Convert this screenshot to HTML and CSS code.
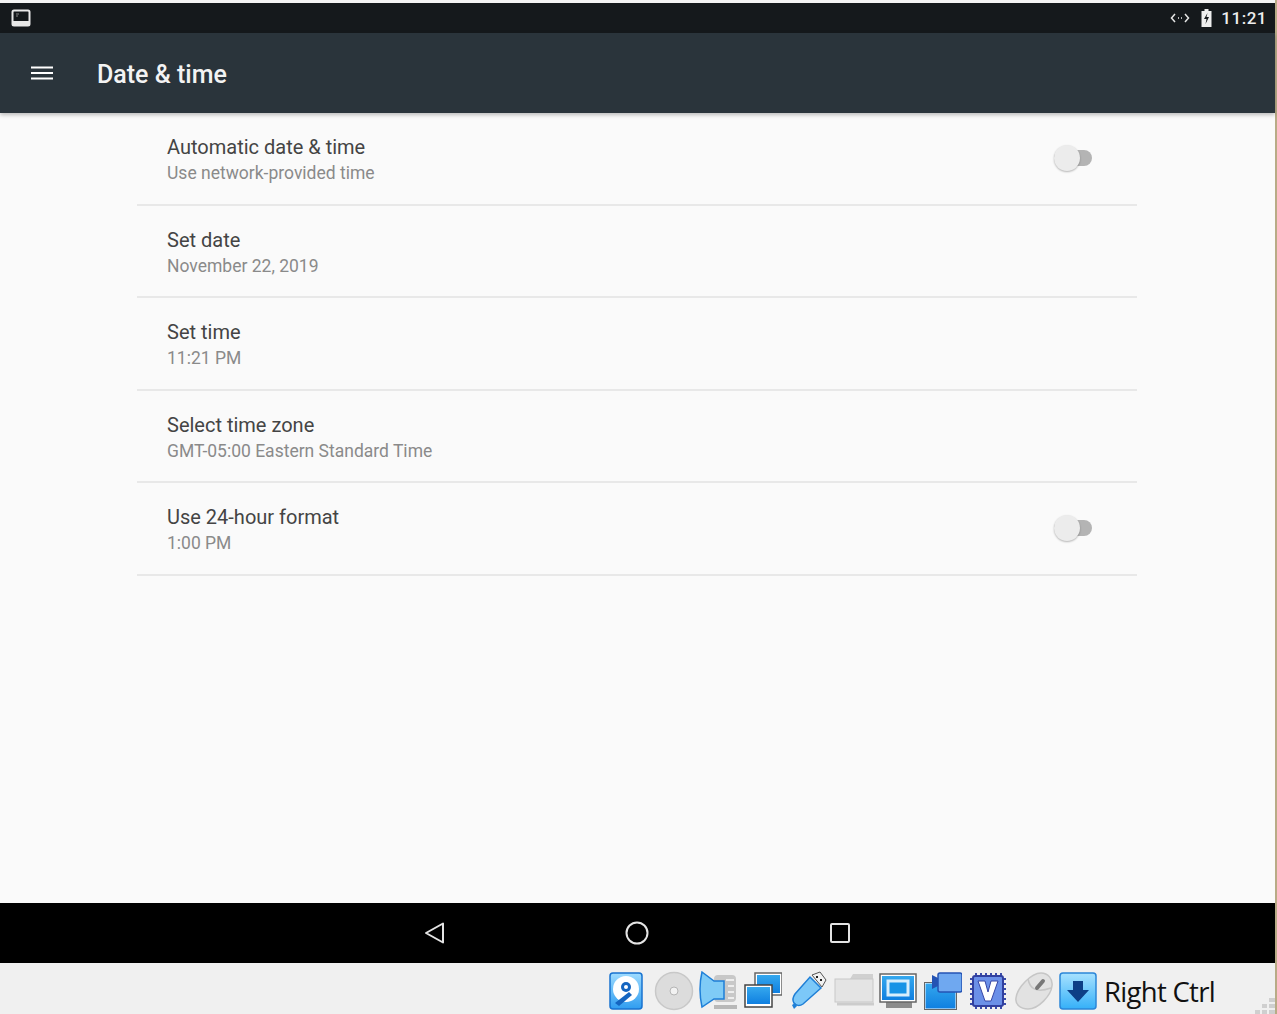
FILE: index.html
```html
<!DOCTYPE html>
<html lang="en">
<head>
<meta charset="utf-8">
<title>Date &amp; time</title>
<link rel="stylesheet" href="styles.css">
</head>
<body>
<div class="screen">
  <div class="statusbar">
    <svg class="vm-icon" width="20" height="18" viewBox="0 0 20 18"><rect x="1.500" y="1.500" width="17" height="15" rx="1.500" fill="#15191c" stroke="#e8e8e8" stroke-width="2"/><rect x="2" y="12" width="16" height="4" fill="#e8e8e8"/><path d="M5 5h3M5 7h2" stroke="#888" stroke-width="1"/></svg>
    <div class="status-right">
      <svg width="20" height="12" viewBox="0 0 20 12" fill="none" stroke="#e6e6e6" stroke-width="1.500"><path d="M5 2 1.500 6 5 10M15 2l3.500 4L15 10"/><path d="M8 6h1M11 6h1"/></svg>
      <svg class="battery" width="13" height="18" viewBox="0 0 12 18"><path d="M4 0h4v2h3v16H1V2h3z" fill="#eee"/><path d="M7 4 3.500 10H6l-1 5 3.500-7H6z" fill="#15191c"/></svg>
      <span class="clock">11:21</span>
    </div>
  </div>
  <header class="toolbar">
    <svg class="menu" width="24" height="16" viewBox="0 0 24 16"><path d="M1 2.500h22M1 8h22M1 13.500h22" stroke="#fff" stroke-width="2"/></svg>
    <h1 class="title">Date &amp; time</h1>
  </header>
  <main class="content">
    <div class="list">
      <div class="row"><div><div class="row-title">Automatic date &amp; time</div><div class="row-sub">Use network-provided time</div></div><div class="switch"><i class="thumb"></i></div></div>
      <div class="row"><div><div class="row-title">Set date</div><div class="row-sub">November 22, 2019</div></div></div>
      <div class="row"><div><div class="row-title">Set time</div><div class="row-sub">11:21 PM</div></div></div>
      <div class="row"><div><div class="row-title">Select time zone</div><div class="row-sub">GMT-05:00 Eastern Standard Time</div></div></div>
      <div class="row"><div><div class="row-title">Use 24-hour format</div><div class="row-sub">1:00 PM</div></div><div class="switch"><i class="thumb"></i></div></div>
    </div>
  </main>
  <nav class="navbar">
    <svg width="24" height="26" viewBox="0 0 24 26" fill="none" stroke="#e4e4e4" stroke-width="2" stroke-linejoin="round"><path d="M20 3.500v19L3 13z"/></svg>
    <svg width="24" height="24" viewBox="0 0 24 24" fill="none" stroke="#e4e4e4" stroke-width="2"><circle cx="12" cy="12" r="10.500"/></svg>
    <svg class="nav-square" width="22" height="22" viewBox="0 0 22 22" fill="none" stroke="#e4e4e4" stroke-width="2" stroke-linejoin="round"><rect x="2" y="2" width="18" height="18" rx="1"/></svg>
  </nav>
  <footer class="vbox">
    <div class="tray">
      <svg class="ic" width="34" height="38" viewBox="0 0 34 38"><defs><linearGradient id="b" x1="0" y1="0" x2="0" y2="1"><stop offset="0" stop-color="#9fdcff"/><stop offset="1" stop-color="#2f9df0"/></linearGradient></defs><rect x="1" y="1" width="32" height="36" rx="3" fill="url(#b)" stroke="#1873d0" stroke-width="1.500"/><circle cx="17" cy="17" r="13" fill="#fff"/><circle cx="17" cy="15" r="5" fill="#1565c0"/><circle cx="17" cy="15" r="2" fill="#fff"/><path d="M6 31 20 20l3 3-13 11z" fill="#1565c0"/></svg>
      <svg class="ic" width="40" height="40" viewBox="0 0 40 40"><circle cx="20" cy="20" r="18.500" fill="#dcdcdc" stroke="#c8c8c8" stroke-width="1.500"/><circle cx="20" cy="20" r="4" fill="#f2f2f2" stroke="#b5b5b5"/></svg>
      <svg class="ic" width="39" height="40" viewBox="0 0 39 40"><rect x="15" y="4" width="22" height="27" rx="4" fill="#c8c8c8"/><path d="M27 9h8M29 15h6M29 21h6M29 27h6" stroke="#eee" stroke-width="2"/><path d="M15 36h23" stroke="#b8b8b8" stroke-width="4"/><path d="M3 1 15 10H25V28H15L3 36Q-1 18 3 1z" fill="#7fcbf6" stroke="#1e7fd8" stroke-width="1.500"/></svg>
      <svg class="ic" width="38" height="38" viewBox="0 0 38 38"><defs><linearGradient id="m" x1="0" y1="0" x2="0" y2="1"><stop offset="0" stop-color="#35a8ee"/><stop offset="1" stop-color="#0f7fe0"/></linearGradient></defs><rect x="11" y="1" width="27" height="22" fill="#fff" stroke="#666" stroke-width="1.500"/><rect x="13" y="3" width="23" height="18" fill="url(#m)"/><rect x="1" y="13" width="27" height="22" fill="#fff" stroke="#444" stroke-width="1.500"/><rect x="3" y="15" width="23" height="17" fill="url(#m)"/></svg>
      <svg class="ic" width="38" height="40" viewBox="0 0 38 40"><path d="M23 4 31 1l6 8-4 7z" fill="#f2f2f2" stroke="#555"/><path d="M21 6 32 17 14 33c-3 2-7 2-9-1s-1-6 1-9z" fill="#7cc8f8" stroke="#1f7fd6" stroke-width="1.500"/><path d="M3 34l3-2 2 3-3 3z" fill="#1f7fd6"/><path d="M27 6h2M31 9h2" stroke="#222" stroke-width="2"/></svg>
      <svg class="ic" width="40" height="36" viewBox="0 0 40 36"><path d="M16 6 19 1h20v28H1V6z" fill="#d0d0d0"/><rect x="1" y="6" width="38" height="23" fill="#e4e4e4" stroke="#c8c8c8"/><path d="M3 31h38" stroke="#ccc" stroke-width="3"/></svg>
      <svg class="ic" width="38" height="36" viewBox="0 0 38 36"><path d="M7 29h26v6H7z" fill="#8c8c8c"/><rect x="1" y="1" width="36" height="28" fill="#fff" stroke="#666" stroke-width="1.500"/><rect x="3" y="3" width="32" height="24" fill="url(#m)"/><rect x="9" y="8" width="20" height="14" fill="#1793e6" stroke="#d8eefc" stroke-width="3"/></svg>
      <svg class="ic" width="38" height="38" viewBox="0 0 38 38"><rect x="1" y="11" width="31" height="26" fill="url(#m)" stroke="#fff" stroke-width="1"/><rect x="0.500" y="10.500" width="32" height="27" fill="none" stroke="#666"/><rect x="14" y="1" width="24" height="19" rx="2" fill="#6fa8f0" stroke="#2453b4" stroke-width="1.500"/><path d="M14 6 8 3v14l6-3z" fill="#2453b4"/></svg>
      <svg class="ic" width="38" height="38" viewBox="0 0 38 38"><path d="M7 1v36M12 1v36M17 1v36M22 1v36M27 1v36M32 1v36M1 7h36M1 12h36M1 17h36M1 22h36M1 27h36M1 32h36" stroke="#3b4ba8" stroke-width="2"/><rect x="4" y="4" width="30" height="30" rx="2" fill="#6b90e8" stroke="#31409f" stroke-width="2"/><path d="M9 9h7l3 11 3-11h7l-7 20h-6z" fill="#fff" stroke="#3646a6"/></svg>
      <svg class="ic" width="40" height="40" viewBox="0 0 40 40"><path d="M27 2c7 0 12 6 11 13-1 9-13 23-24 23C6 38 1 33 2 27 3 17 17 2 27 2z" fill="#e2e2e2" stroke="#c6c6c6" stroke-width="1.500"/><path d="M14 8c2 10 8 14 23 9" fill="none" stroke="#c6c6c6" stroke-width="1.500"/><path d="m23 17 6-7" stroke="#777" stroke-width="4" stroke-linecap="round"/></svg>
      <svg class="ic" width="38" height="38" viewBox="0 0 38 38"><defs><linearGradient id="d" x1="0" y1="0" x2="0" y2="1"><stop offset="0" stop-color="#a8e2ff"/><stop offset="1" stop-color="#35b0f8"/></linearGradient></defs><rect x="1" y="1" width="36" height="36" rx="3" fill="url(#d)" stroke="#2b86d8" stroke-width="1.500"/><path d="M14 9h10v9h6L19 30 8 18h6z" fill="#0d3f86"/></svg>
    </div>
    <span class="hostkey">Right Ctrl</span>
    <svg class="grip" width="20" height="16" viewBox="0 0 20 16"><path d="M14 0h6v4h-6zM7 6h5v4H7zM14 6h6v4h-6zM0 12h5v4H0zM7 12h5v4H7zM14 12h6v4h-6z" fill="#cfcfcf"/></svg>
  </footer>
</div>
</body>
</html>
```

FILE: styles.css
```css
* { box-sizing: border-box; }
html, body { margin: 0; padding: 0; }
body { width: 1277px; height: 1014px; overflow: hidden; background: #f0f0f0; font-family: Roboto, "Liberation Sans", sans-serif; }
.screen { width: 1277px; height: 1014px; display: flex; flex-direction: column; padding-top: 3px; background: #f4f4f4; border-right: 2px solid #b8ab86; }
.statusbar { height: 30px; flex: none; background: #15191c; display: flex; align-items: center; justify-content: space-between; padding: 0 8px 0 11px; }
.vm-icon { display: block; }
.status-right { display: flex; align-items: center; color: #eee; }
.battery { margin: 0 8px 0 10px; }
.clock { font-size: 17px; font-weight: 500; letter-spacing: 0.5px; }
.toolbar { height: 80px; flex: none; background: #2a343b; display: flex; align-items: center; padding-left: 30px; gap: 43px; box-shadow: 0 2px 4px rgba(0,0,0,.25); position: relative; z-index: 1; }
.menu { display: block; }
.title { margin: 2px 0 0; font-size: 25px; font-weight: 500; color: #f3f3f3; }
.content { flex: 1; background: #fafafa; padding: 0 0 0 137px; }
.list { width: 1000px; }
.row { height: 92.5px; border-bottom: 2px solid #e8e8e8; display: flex; align-items: center; justify-content: space-between; padding: 4px 45px 0 30px; }
.row-title { font-size: 20px; line-height: 24px; color: #444; }
.row-sub { font-size: 17.500px; line-height: 24px; margin-top: 2px; color: #8a8a8a; }
.switch { width: 38px; height: 16px; border-radius: 8px; background: #b4b4b4; position: relative; margin: -4px 0 0 auto; }
.thumb { position: absolute; left: 0; top: -5px; width: 26px; height: 26px; border-radius: 50%; background: #ececec; box-shadow: 0 1px 2px rgba(0,0,0,.28); }
.navbar { height: 60px; flex: none; background: #000; display: flex; align-items: center; padding-left: 423px; gap: 178px; }
.nav-square { margin-left: 2px; }
.vbox { height: 51px; flex: none; background: #f0f0f0; display: flex; align-items: center; padding: 4px 0 0 609px; position: relative; }
.tray { display: grid; grid-template-columns: repeat(11, 45px); align-items: center; }
.ic { display: block; }
.hostkey { font-family: "Open Sans", "Liberation Sans", sans-serif; font-size: 27.500px; color: #111; letter-spacing: -0.7px; white-space: nowrap; margin-top: 1px; }
.grip { position: absolute; right: 0; bottom: 0; }
```
